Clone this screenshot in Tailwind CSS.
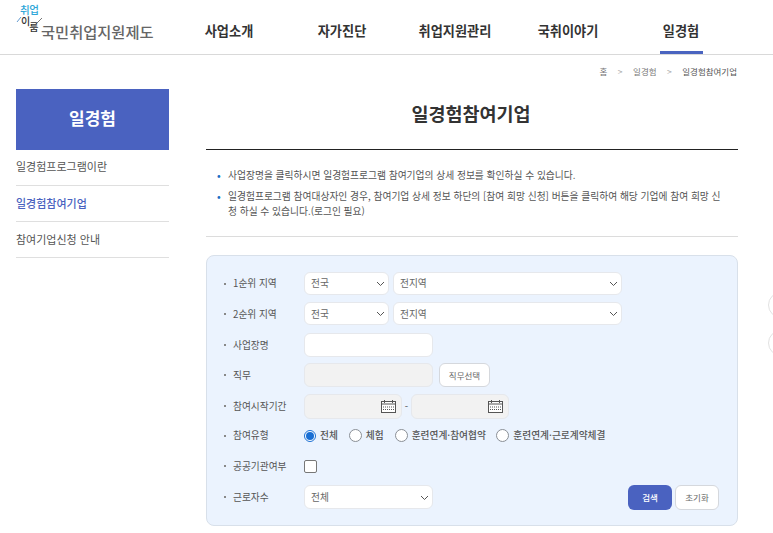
<!DOCTYPE html>
<html lang="ko">
<head>
<meta charset="utf-8">
<script src="https://cdn.jsdelivr.net/npm/@tailwindcss/browser@4"></script>
</head>
<body class="bg-white overflow-hidden font-['Noto_Sans_CJK_KR','Noto_Sans',sans-serif] text-[#555]">
<div class="relative w-[773px] h-[533px] overflow-hidden">
  <header class="h-[55px] border-b border-[#d9d9d9] flex pl-[16px]">
    <div class="relative w-[156.5px] h-[54px]">
      <div class="absolute left-[4px] top-[4px] text-[10.5px] leading-[12px] font-medium text-[#2ea6d8] whitespace-nowrap tracking-[-0.5px]">취업</div>
      <div class="absolute left-[5px] top-[16px] flex text-[10px] leading-[10px] font-medium text-[#333]"><span class="mr-[-1px]">이</span><span class="mt-[6px]">룸</span></div>
      <svg class="absolute left-0 top-0" width="30" height="30" viewBox="0 0 30 30" fill="none"><path d="M1 22 L5 17" stroke="#3b82c4" stroke-width="0.8"/><path d="M19 25 L26 18" stroke="#555" stroke-width="0.8"/></svg>
      <div class="absolute left-[25px] top-[21px] text-[15.3px] leading-[20px] font-medium text-[#666] whitespace-nowrap">국민취업지원제도</div>
    </div>
    <nav class="flex w-[565px] h-[54px] text-[13.2px] font-bold text-[#333]">
      <div class="w-[113px] flex justify-center pt-[21px] leading-[20px]">사업소개</div>
      <div class="w-[113px] flex justify-center pt-[21px] leading-[20px]">자가진단</div>
      <div class="w-[113px] flex justify-center pt-[21px] leading-[20px]">취업지원관리</div>
      <div class="w-[113px] flex justify-center pt-[21px] leading-[20px]">국취이야기</div>
      <div class="w-[113px] flex justify-center"><div class="w-[43px] h-[54px] pt-[21px] leading-[20px] text-center border-b-[3px] border-[#4a64c0] whitespace-nowrap">일경험</div></div>
    </nav>
  </header>
  <div class="flex pl-[16px]">
    <aside class="w-[153px] mt-[34px] mr-[37px]">
      <div class="h-[61px] bg-[#4a62c0] text-white text-[17px] font-bold flex items-center justify-center pb-[3px]">일경험</div>
      <div class="h-[36px] border-b border-[#dfdfdf] flex items-center text-[11px] text-[#555] pb-[2px]">일경험프로그램이란</div>
      <div class="h-[36px] border-b border-[#dfdfdf] flex items-center text-[11px] font-medium text-[#4a62c0]">일경험참여기업</div>
      <div class="h-[36px] border-b border-[#dfdfdf] flex items-center text-[11px] text-[#555]">참여기업신청 안내</div>
    </aside>
    <main class="w-[532px]">
      <div class="h-[33px] flex justify-end items-center gap-[10.5px] text-[8.5px] text-[#777] pb-[1px] pr-[1px]">
        <span>홈</span><span class="text-[#aaa]">&gt;</span><span>일경험</span><span class="text-[#aaa]">&gt;</span><span class="text-[#555]">일경험참여기업</span>
      </div>
      <h1 class="h-[48px] text-center text-[18.5px] leading-[50px] font-bold text-[#333] pr-[2px]">일경험참여기업</h1>
      <div class="border-t border-[#222] mt-[13px] pt-[18px] pb-[17px]">
        <div class="flex text-[9.75px] leading-[15px] text-[#555] mb-[6px] pl-[11px]"><span class="w-[11px] shrink-0 text-[#1d6fc4] font-bold">•</span><span>사업장명을 클릭하시면 일경험프로그램 참여기업의 상세 정보를 확인하실 수 있습니다.</span></div>
        <div class="flex text-[9.75px] leading-[15px] text-[#555] pl-[11px] pr-[17px]"><span class="w-[11px] shrink-0 text-[#1d6fc4] font-bold">•</span><span>일경험프로그램 참여대상자인 경우, 참여기업 상세 정보 하단의 [참여 희망 신청] 버튼을 클릭하여 해당 기업에 참여 희망 신청 하실 수 있습니다.(로그인 필요)</span></div>
      </div>
      <div class="border-t border-[#dcdcdc] h-[19px]"></div>
      <form class="h-[271px] rounded-[8px] bg-[#ebf3fe] border border-[#d8e0ea] pt-[16px] pl-[17px] pr-[19px] text-[9.7px] text-[#555]">
        <div class="flex h-[30.4px]">
          <div class="w-[80px] h-[23px] flex items-center"><span class="w-[2px] h-[2px] bg-[#888] mr-[7px]"></span>1순위 지역</div>
          <div class="relative w-[85px] h-[23px] bg-white rounded-[6px] border border-[#e6e8ec] flex items-center pl-[6px] mr-[4px] text-[#666]">전국
            <svg class="absolute right-[3px] top-[8px]" width="9" height="6" viewBox="0 0 9 6" fill="none"><path d="M1 1 L4.5 4.5 L8 1" stroke="#555" stroke-width="1"/></svg></div>
          <div class="relative w-[229px] h-[23px] bg-white rounded-[6px] border border-[#e6e8ec] flex items-center pl-[6px] text-[#666]">전지역
            <svg class="absolute right-[3px] top-[8px]" width="9" height="6" viewBox="0 0 9 6" fill="none"><path d="M1 1 L4.5 4.5 L8 1" stroke="#555" stroke-width="1"/></svg></div>
        </div>
        <div class="flex h-[30.4px]">
          <div class="w-[80px] h-[23px] flex items-center"><span class="w-[2px] h-[2px] bg-[#888] mr-[7px]"></span>2순위 지역</div>
          <div class="relative w-[85px] h-[23px] bg-white rounded-[6px] border border-[#e6e8ec] flex items-center pl-[6px] mr-[4px] text-[#666]">전국
            <svg class="absolute right-[3px] top-[8px]" width="9" height="6" viewBox="0 0 9 6" fill="none"><path d="M1 1 L4.5 4.5 L8 1" stroke="#555" stroke-width="1"/></svg></div>
          <div class="relative w-[229px] h-[23px] bg-white rounded-[6px] border border-[#e6e8ec] flex items-center pl-[6px] text-[#666]">전지역
            <svg class="absolute right-[3px] top-[8px]" width="9" height="6" viewBox="0 0 9 6" fill="none"><path d="M1 1 L4.5 4.5 L8 1" stroke="#555" stroke-width="1"/></svg></div>
        </div>
        <div class="flex h-[30.4px]">
          <div class="w-[80px] h-[24px] flex items-center"><span class="w-[2px] h-[2px] bg-[#888] mr-[7px]"></span>사업장명</div>
          <div class="w-[129px] h-[24px] bg-white rounded-[6px] border border-[#e6e8ec]"></div>
        </div>
        <div class="flex h-[30.4px]">
          <div class="w-[80px] h-[24px] flex items-center"><span class="w-[2px] h-[2px] bg-[#888] mr-[7px]"></span>직무</div>
          <div class="w-[129px] h-[24px] bg-[#f2f2f2] rounded-[6px] border border-[#e6e8ec] mr-[6px]"></div>
          <div class="w-[51px] h-[24px] bg-white rounded-[6px] border border-[#d5d8dd] flex items-center justify-center text-[8.5px] text-[#666]">직무선택</div>
        </div>
        <div class="flex h-[30px]">
          <div class="w-[80px] h-[25px] flex items-center"><span class="w-[2px] h-[2px] bg-[#888] mr-[7px]"></span>참여시작기간</div>
          <div class="relative w-[98px] h-[25px] bg-[#f2f2f2] rounded-[6px] border border-[#e6e8ec]">
            <svg class="absolute right-[5px] top-[5px]" width="15" height="13" viewBox="0 0 15 13" fill="none" stroke="#555"><rect x="0.5" y="1.5" width="14" height="11" fill="#fff"/><path d="M0.5 4 H14.5 M3.5 0 V3 M11.5 0 V3"/><path d="M2 7 H13 M2 9.5 H13" stroke-dasharray="1 1"/></svg></div>
          <div class="w-[9px] h-[25px] flex items-center justify-center">-</div>
          <div class="relative w-[98px] h-[25px] bg-[#f2f2f2] rounded-[6px] border border-[#e6e8ec]">
            <svg class="absolute right-[5px] top-[5px]" width="15" height="13" viewBox="0 0 15 13" fill="none" stroke="#555"><rect x="0.5" y="1.5" width="14" height="11" fill="#fff"/><path d="M0.5 4 H14.5 M3.5 0 V3 M11.5 0 V3"/><path d="M2 7 H13 M2 9.5 H13" stroke-dasharray="1 1"/></svg></div>
        </div>
        <div class="flex h-[30.5px] items-center pb-[6.5px]">
          <div class="w-[80px] flex items-center"><span class="w-[2px] h-[2px] bg-[#888] mr-[7px]"></span>참여유형</div>
          <span class="w-[12px] h-[12px] rounded-full border border-[#1a6fd4] bg-white flex items-center justify-center mr-[4px]"><span class="w-[8px] h-[8px] rounded-full bg-[#1a6fd4]"></span></span><span class="mr-[11px] font-medium">전체</span>
          <span class="w-[13px] h-[13px] rounded-full border border-[#8a8f96] bg-white mr-[4px]"></span><span class="mr-[11px] font-medium">체험</span>
          <span class="w-[13px] h-[13px] rounded-full border border-[#8a8f96] bg-white mr-[4px]"></span><span class="mr-[10.5px] font-medium">훈련연계·참여협약</span>
          <span class="w-[13px] h-[13px] rounded-full border border-[#8a8f96] bg-white mr-[4px]"></span><span class="font-medium">훈련연계·근로계약체결</span>
        </div>
        <div class="flex h-[30.5px] items-center pb-[6.5px]">
          <div class="w-[80px] flex items-center"><span class="w-[2px] h-[2px] bg-[#888] mr-[7px]"></span>공공기관여부</div>
          <span class="w-[13px] h-[13px] rounded-[2px] border border-[#777] bg-white"></span>
        </div>
        <div class="flex h-[25px] items-center">
          <div class="w-[80px] flex items-center"><span class="w-[2px] h-[2px] bg-[#888] mr-[7px]"></span>근로자수</div>
          <div class="relative w-[129px] h-[24px] bg-white rounded-[6px] border border-[#e6e8ec] flex items-center pl-[6px] text-[#666]">전체
            <svg class="absolute right-[3px] top-[9px]" width="9" height="6" viewBox="0 0 9 6" fill="none"><path d="M1 1 L4.5 4.5 L8 1" stroke="#555" stroke-width="1"/></svg></div>
          <div class="flex-1"></div>
          <div class="w-[44px] h-[25px] rounded-[6px] bg-[#4a62c0] text-white text-[8.5px] font-medium flex items-center justify-center mr-[3px]">검색</div>
          <div class="w-[44px] h-[25px] rounded-[6px] bg-white border border-[#d5d8dd] text-[8.5px] text-[#666] flex items-center justify-center mr-[-1px]">초기화</div>
        </div>
      </form>
    </main>
  </div>
  <div class="absolute left-[768px] top-[292px] w-[26px] h-[26px] rounded-full border border-[#e2e2e2] bg-white"></div>
  <div class="absolute left-[768px] top-[330px] w-[26px] h-[26px] rounded-full border border-[#e2e2e2] bg-white"></div>
</div>
</body>
</html>
